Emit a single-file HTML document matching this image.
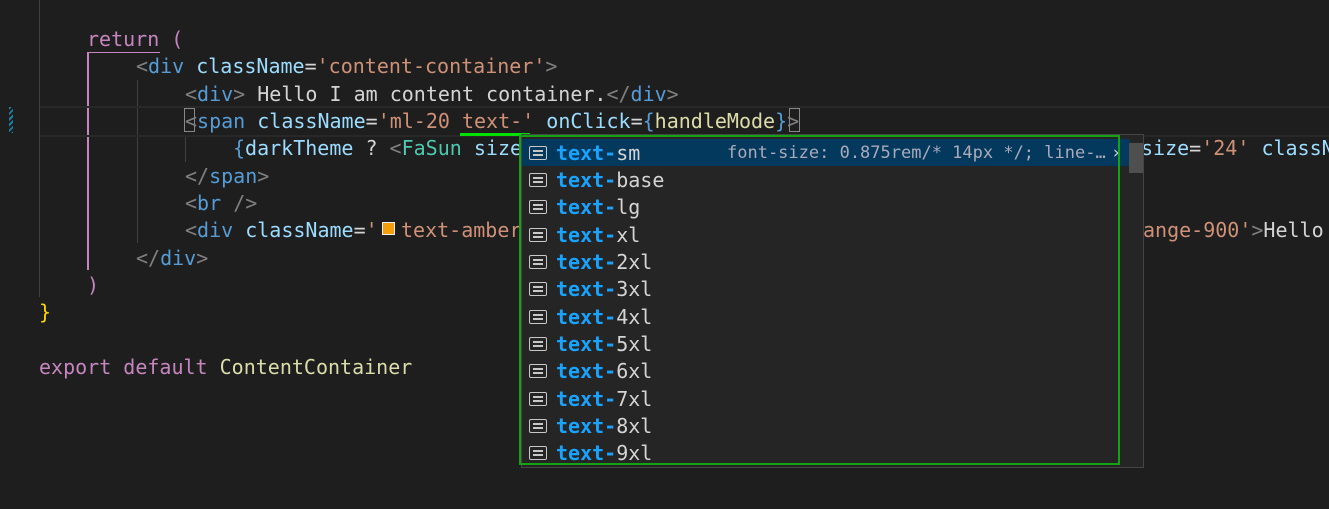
<!DOCTYPE html>
<html><head><style>
body{margin:0;width:1329px;height:509px;background:#1e1e1e;overflow:hidden;position:relative;font-family:"DejaVu Sans Mono","Liberation Mono",monospace;font-size:20px;}
.l{position:absolute;white-space:pre;height:27px;line-height:27px;color:#d4d4d4}
.k{color:#c586c0}.t{color:#808080}.n{color:#569cd6}.a{color:#9cdcfe}.s{color:#ce9178}.f{color:#dcdcaa}.c{color:#4ec9b0}.y{color:#ffd700}
.g{position:absolute;background:#404040;width:1px}
#w{position:absolute;left:521px;top:134px;width:621px;height:332px;background:#252526;border:1px solid #454545;overflow:hidden}
.r{position:absolute;left:0;width:608px;height:27px;line-height:27px;white-space:pre;color:#d4d4d4}
.r b{color:#18a3ff}
.ic{position:absolute;left:7px;top:6px;width:16px;height:12px;border:1.5px solid #c8c8c8;border-radius:2px}
.ic:before{content:"";position:absolute;left:3px;right:3px;top:3px;height:1.5px;background:#c8c8c8;box-shadow:0 4px 0 #c8c8c8}
.tx{position:absolute;left:34px}
</style></head><body>
<div class="g" style="left:39px;top:0;height:297px"></div>
<div style="position:absolute;left:87px;top:52px;width:2px;height:218px;background:#c586c0"></div>
<div style="position:absolute;left:87px;top:52px;width:73px;height:1px;background:#c586c0"></div>
<div class="g" style="left:137px;top:80px;height:163px"></div>
<div class="g" style="left:185px;top:135px;height:27px"></div>
<div style="position:absolute;left:40px;right:0;top:106px;height:27px;border-top:2px solid #282828;border-bottom:2px solid #282828"></div>
<div style="position:absolute;left:9px;top:107px;width:4px;height:26px;background:repeating-linear-gradient(135deg,#1b81a8 0 2px,transparent 2px 4px)"></div>
<div style="position:absolute;left:184px;top:108px;width:11px;height:24px;border:1px solid #888;box-sizing:border-box"></div>
<div style="position:absolute;left:789px;top:108px;width:11px;height:24px;border:1px solid #888;box-sizing:border-box"></div>

<div class="l" style="left:87px;top:26px"><span class="k">return</span> <span class="k">(</span></div>
<div class="l" style="left:136px;top:53px"><span class="t">&lt;</span><span class="n">div</span> <span class="a">className</span>=<span class="s">'content-container'</span><span class="t">&gt;</span></div>
<div class="l" style="left:185px;top:81px"><span class="t">&lt;</span><span class="n">div</span><span class="t">&gt;</span> Hello I am content container.<span class="t">&lt;/</span><span class="n">div</span><span class="t">&gt;</span></div>
<div class="l" style="left:185px;top:108px"><span class="t">&lt;</span><span class="n">span</span> <span class="a">className</span>=<span class="s">'ml-20 text-'</span> <span class="a">onClick</span>=<span class="n">{</span><span class="f">handleMode</span><span class="n">}</span><span class="t">&gt;</span></div>
<div class="l" style="left:233px;top:135px"><span class="n">{</span><span class="a">darkTheme</span> ? <span class="t">&lt;</span><span class="c">FaSun</span> <span class="a">size</span></div>
<div class="l" style="left:1141px;top:135px"><span class="a">size</span>=<span class="s">'24'</span> <span class="a">classN</span></div>
<div class="l" style="left:185px;top:163px"><span class="t">&lt;/</span><span class="n">span</span><span class="t">&gt;</span></div>
<div class="l" style="left:185px;top:190px"><span class="t">&lt;</span><span class="n">br</span> <span class="t">/&gt;</span></div>
<div class="l" style="left:185px;top:217px"><span class="t">&lt;</span><span class="n">div</span> <span class="a">className</span>=<span class="s">'</span></div>
<div style="position:absolute;left:382px;top:222px;width:13px;height:13px;background:#f59e0b;border:1.5px solid #eee;box-sizing:border-box"></div>
<div class="l" style="left:401px;top:217px"><span class="s">text-amber</span></div>
<div class="l" style="left:1143px;top:217px"><span class="s">ange-900'</span><span class="t">&gt;</span>Hello</div>
<div class="l" style="left:136px;top:245px"><span class="t">&lt;/</span><span class="n">div</span><span class="t">&gt;</span></div>
<div class="l" style="left:87px;top:272px"><span class="k">)</span></div>
<div class="l" style="left:39px;top:299px"><span class="y">}</span></div>
<div class="l" style="left:39px;top:354px"><span class="k">export</span> <span class="k">default</span> <span class="f">ContentContainer</span></div>

<div style="position:absolute;left:460px;top:133px;width:70px;height:3px;background:#00e000"></div>
<div id="w">
 <div style="position:absolute;left:0;top:4px;width:608px;height:27px;background:#04395e"></div>
 <div style="position:absolute;left:607px;top:8px;width:14px;height:30px;background:#4f4f4f"></div>
 <div class="r" style="top:5px"><span class="ic"></span><span class="tx"><b>text-</b>sm</span><span style="position:absolute;left:205px;font-size:17px;color:#aab">font-size: 0.875rem/* 14px */; line-…</span><span style="position:absolute;left:589px;font-size:17px">›</span></div>
 <div class="r" style="top:32px"><span class="ic"></span><span class="tx"><b>text-</b>base</span></div>
 <div class="r" style="top:59px"><span class="ic"></span><span class="tx"><b>text-</b>lg</span></div>
 <div class="r" style="top:87px"><span class="ic"></span><span class="tx"><b>text-</b>xl</span></div>
 <div class="r" style="top:114px"><span class="ic"></span><span class="tx"><b>text-</b>2xl</span></div>
 <div class="r" style="top:141px"><span class="ic"></span><span class="tx"><b>text-</b>3xl</span></div>
 <div class="r" style="top:169px"><span class="ic"></span><span class="tx"><b>text-</b>4xl</span></div>
 <div class="r" style="top:196px"><span class="ic"></span><span class="tx"><b>text-</b>5xl</span></div>
 <div class="r" style="top:223px"><span class="ic"></span><span class="tx"><b>text-</b>6xl</span></div>
 <div class="r" style="top:251px"><span class="ic"></span><span class="tx"><b>text-</b>7xl</span></div>
 <div class="r" style="top:278px"><span class="ic"></span><span class="tx"><b>text-</b>8xl</span></div>
 <div class="r" style="top:305px"><span class="ic"></span><span class="tx"><b>text-</b>9xl</span></div>
</div>
<div style="position:absolute;left:520px;top:136px;width:597px;height:326px;border:2px solid #14a314;box-sizing:content-box;margin:-1px"></div>
</body></html>
